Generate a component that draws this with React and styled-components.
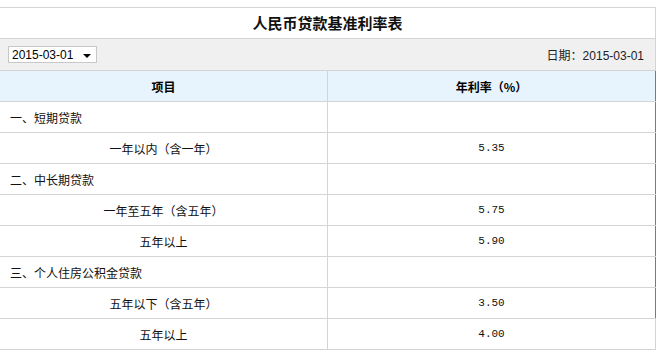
import styled, { createGlobalStyle } from "styled-components"

const GlobalStyle = createGlobalStyle`
    html, body {
        margin: 0;
        padding: 0;
        background: #fff;
    }
    body {
        font-family: "Liberation Sans", "Noto Sans CJK SC", sans-serif;
        color: #000;
    }
`

const rows = [
    { label: "一、短期贷款", section: true },
    { label: "一年以内（含一年）", rate: "5.35" },
    { label: "二、中长期贷款", section: true },
    { label: "一年至五年（含五年）", rate: "5.75" },
    { label: "五年以上", rate: "5.90" },
    { label: "三、个人住房公积金贷款", section: true },
    { label: "五年以下（含五年）", rate: "3.50" },
    { label: "五年以上", rate: "4.00" },
]

function App() {
    return (
        <Page>
            <GlobalStyle />
            <Panel>
                <Title>人民币贷款基准利率表</Title>
                <Toolbar>
                    <DateSelect>
                        <span>2015-03-01</span>
                        <Caret />
                    </DateSelect>
                    <DateLabel>日期：2015-03-01</DateLabel>
                </Toolbar>
                <Table>
                    <thead>
                        <tr>
                            <HeadCell>项目</HeadCell>
                            <HeadCell $right>年利率（%）</HeadCell>
                        </tr>
                    </thead>
                    <tbody>
                        {rows.map((r, i) => (
                            <tr key={i}>
                                <Cell $section={r.section}>{r.label}</Cell>
                                <RateCell $last={i === rows.length - 1}>
                                    {r.rate}
                                </RateCell>
                            </tr>
                        ))}
                    </tbody>
                </Table>
            </Panel>
        </Page>
    )
}

const Page = styled.div`
    padding-top: 7px;
    width: 656px;
`

const Panel = styled.div`
    border-top: 1px solid #d4d4d4;
    border-right: 1px solid #d4d4d4;
`

const Title = styled.div`
    height: 30px;
    line-height: 30px;
    text-align: center;
    font-family: "Noto Sans CJK SC", sans-serif;
    font-weight: bold;
    font-size: 15px;
    color: #111;
    border-bottom: 1px solid #d4d4d4;
`

const Toolbar = styled.div`
    height: 31px;
    background: #f0f0f0;
    border-bottom: 1px solid #d4d4d4;
    display: flex;
    align-items: center;
    justify-content: space-between;
    padding: 0 11px 0 8px;
`

const DateSelect = styled.div`
    width: 81px;
    height: 15px;
    padding: 0 3px 0 3px;
    background: #fff;
    border: 1px solid #c8c8c8;
    display: flex;
    align-items: center;
    justify-content: space-between;
    font-size: 12px;
    font-family: "Liberation Sans", sans-serif;
    color: #000;
`

const Caret = styled.i`
    width: 0;
    height: 0;
    margin-right: 2px;
    margin-top: 2px;
    border-left: 4px solid transparent;
    border-right: 4px solid transparent;
    border-top: 4px solid #000;
`

const DateLabel = styled.div`
    font-size: 12px;
    font-family: "Liberation Sans", "Noto Sans CJK SC", sans-serif;
    color: #222;
`

const Table = styled.table`
    width: 100%;
    border-collapse: collapse;
    table-layout: fixed;
    font-family: "Noto Sans CJK SC", sans-serif;
    font-size: 12px;
`

const HeadCell = styled.th`
    height: 30px;
    padding: 0;
    background: #e8f4fd;
    font-weight: bold;
    font-size: 12px;
    text-align: center;
    border-bottom: 1px solid #d4d4d4;
    border-right: 1px solid ${p => (p.$right ? "#7a7a7a" : "#d4d4d4")};
    width: 327px;
`

const Cell = styled.td`
    height: 30px;
    padding: 0 0 0 ${p => (p.$section ? "10px" : "0")};
    text-align: ${p => (p.$section ? "left" : "center")};
    border-bottom: 1px solid #d4d4d4;
    border-right: 1px solid #d4d4d4;
    color: #111;
`

const RateCell = styled.td`
    height: 30px;
    padding: 0;
    text-align: center;
    font-family: "Liberation Mono", monospace;
    font-size: 11px;
    border-bottom: 1px solid #d4d4d4;
    border-right: 1px solid ${p => (p.$last ? "#d4d4d4" : "#7a7a7a")};
    color: #111;
`

export default App
